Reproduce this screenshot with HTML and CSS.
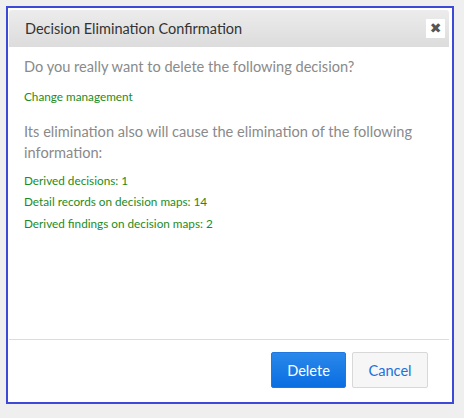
FILE: index.html
```html
<!DOCTYPE html>
<html>
<head>
<meta charset="utf-8">
<link rel="stylesheet" href="styles.css">
</head>
<body>
<div class="page">
  <div class="modal">
    <div class="modal-header">
      <span class="modal-title">Decision Elimination Confirmation</span>
      <button class="close-btn" aria-label="Close">✖</button>
    </div>
    <div class="modal-body">
      <p class="question">Do you really want to delete the following decision?</p>
      <p class="item single">Change management</p>
      <p class="question notice">Its elimination also will cause the elimination of the following information:</p>
      <ul class="items">
        <li class="item">Derived decisions: 1</li>
        <li class="item">Detail records on decision maps: 14</li>
        <li class="item">Derived findings on decision maps: 2</li>
      </ul>
    </div>
    <div class="modal-footer">
      <button class="btn btn-primary">Delete</button>
      <button class="btn btn-default">Cancel</button>
    </div>
  </div>
</div>
</body>
</html>
```
FILE: styles.css
```css
html, body {
  margin: 0;
  padding: 0;
}
body {
  background: #efefef;
  font-family: Lato, "Open Sans", sans-serif;
  width: 464px;
  height: 418px;
  overflow: hidden;
}
.page {
  padding: 6px 0 0 6px;
}
.modal {
  box-sizing: border-box;
  width: 448px;
  height: 398px;
  background: #fff;
  border: 2px solid #3d4ad8;
  display: flex;
  flex-direction: column;
}
.modal-header {
  margin: 2px 3px 0 1px;
  height: 37px;
  box-sizing: border-box;
  background: linear-gradient(#ececec, #dcdcdc);
  border-radius: 3px 3px 0 0;
  display: flex;
  align-items: center;
  justify-content: space-between;
  padding: 0 4px 0 16px;
}
.modal-title {
  font-size: 14.5px;
  color: #333;
}
.close-btn {
  width: 19px;
  height: 19px;
  margin-top: -1px;
  padding: 0;
  border: none;
  background: #fff;
  color: #555;
  font-size: 14px;
  line-height: 19px;
  text-align: center;
  font-family: "DejaVu Sans", sans-serif;
}
.modal-body {
  flex: 1;
  padding: 9px 16px 0 16px;
}
.question {
  margin: 0;
  font-size: 14.6px;
  line-height: 21px;
  color: #8a8a8a;
}
.notice {
  margin-top: 13px;
}
.item {
  margin: 0;
  font-size: 11.75px;
  line-height: 21.5px;
  color: #1c8c1c;
}
.single {
  margin-top: 9px;
}
.items {
  list-style: none;
  padding: 0;
  margin: 7px 0 0 0;
}
.modal-footer {
  margin: 0 3px 0 1px;
  border-top: 1px solid #dcdcdc;
  height: 63px;
  box-sizing: border-box;
  display: flex;
  justify-content: flex-end;
  align-items: flex-start;
  gap: 6px;
  padding: 12px 21px 0 0;
}
.btn {
  font-family: Lato, "Open Sans", sans-serif;
  font-size: 14.6px;
  height: 36px;
  width: 75px;
  border-radius: 2px;
  padding: 0;
}
.btn-primary {
  background: linear-gradient(#2a88ea, #0a6ee2);
  border: 1px solid #1e78e0;
  color: #fff;
}
.btn-default {
  width: 76px;
  background: #f6f6f6;
  border: 1px solid #d8d8d8;
  color: #1a72dc;
}
```
